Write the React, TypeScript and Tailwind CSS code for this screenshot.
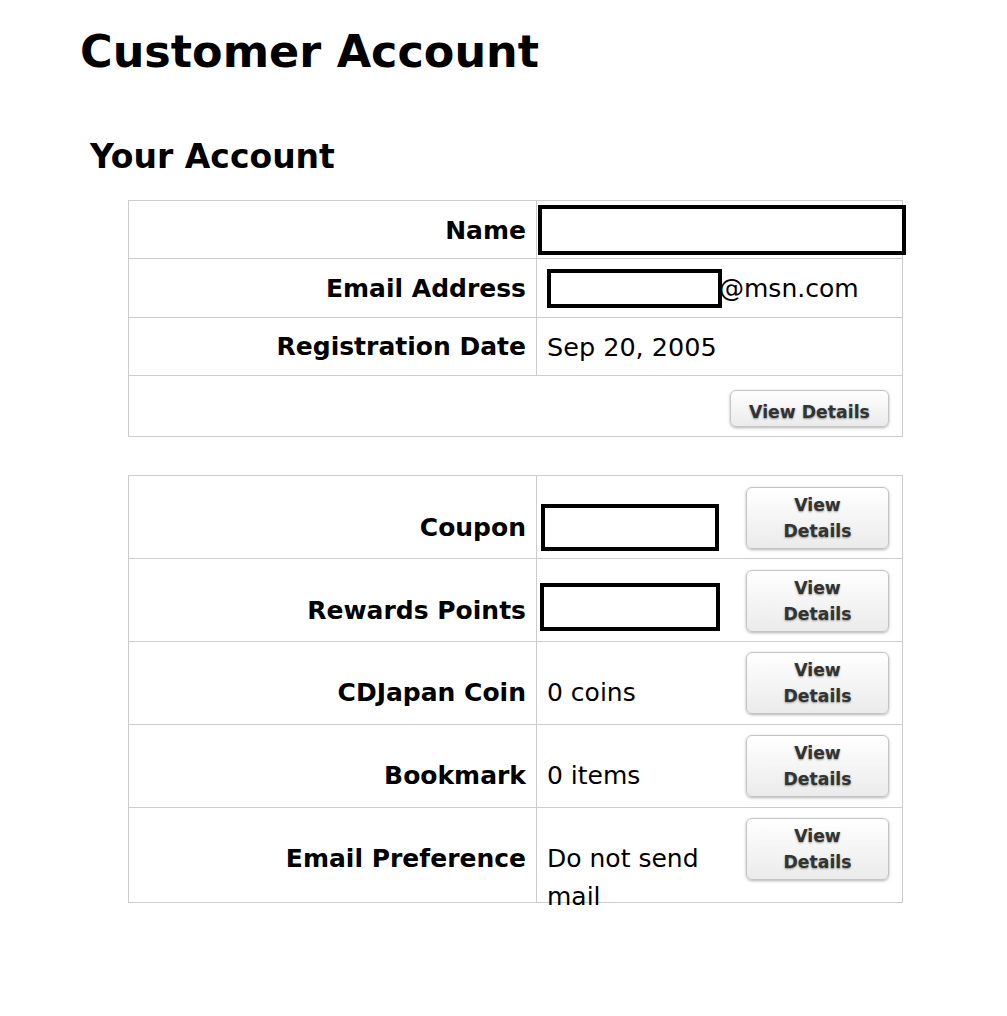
import React from 'react';

const font = "font-['DejaVu_Sans',Verdana,sans-serif]";

function DetailsButton({ wide = false }: { wide?: boolean }) {
  return (
    <button
      className={
        'shrink-0 rounded-[6px] border border-[#c4c4c4] bg-gradient-to-b from-white to-[#ebebeb] px-2 py-[4px] text-center text-[17.3px] font-bold leading-[26px] text-[#333] shadow-[0_1px_3px_rgba(0,0,0,0.3)] [text-shadow:0_1px_2px_rgba(0,0,0,0.4)] ' +
        (wide ? 'h-[37px] w-[159px] py-0 leading-[34px]' : 'w-[143px]')
      }
    >
      {wide ? 'View Details' : (
        <>
          View
          <br />
          Details
        </>
      )}
    </button>
  );
}

function Label({ children, pt }: { children: React.ReactNode; pt: string }) {
  return (
    <div className={'w-[408px] shrink-0 border-r border-[#ccc] pr-[10px] text-right text-[25px] font-bold leading-[38px] ' + pt}>
      {children}
    </div>
  );
}

export default function App() {
  const rows = [
    { label: 'Coupon', box: 'mt-[28px] ml-[4px] h-[47px] w-[178px]', pt: 'pt-[33px]', btn: 'mt-[11px]' },
    { label: 'Rewards Points', box: 'mt-[24px] ml-[3px] h-[48px] w-[180px]', pt: 'pt-[33px]', btn: 'mt-[11px]' },
    { label: 'CDJapan Coin', value: '0 coins', pt: 'pt-[32px]', btn: 'mt-[10px]' },
    { label: 'Bookmark', value: '0 items', pt: 'pt-[32px]', btn: 'mt-[10px]' },
    { label: 'Email Preference', value: 'Do not send mail', pt: 'pt-[32px]', btn: 'mt-[10px]', last: true },
  ];

  return (
    <div className={'min-h-[1016px] bg-white text-black ' + font}>
      <h1 className="pl-[80px] pt-[26px] text-[44.5px] font-bold leading-[52px]">Customer Account</h1>
      <h2 className="mt-[59px] pl-[90px] text-[33px] font-bold leading-[40px]">Your Account</h2>

      {/* account summary */}
      <div className="ml-[128px] mt-[23px] w-[775px] border border-[#ccc]">
        <div className="flex h-[58px] border-b border-[#ccc]">
          <Label pt="pt-[11px]">Name</Label>
          <div className="flex-1">
            <div className="ml-[1px] mt-[4px] h-[50px] w-[368px] border-4 border-black" />
          </div>
        </div>
        <div className="flex h-[59px] border-b border-[#ccc]">
          <Label pt="pt-[11px]">Email Address</Label>
          <div className="flex flex-1 items-start pl-[10px]">
            <div className="mt-[10px] h-[39px] w-[175px] border-4 border-black" />
            <span className="-ml-[3px] pt-[11px] text-[25px] leading-[38px]">@msn.com</span>
          </div>
        </div>
        <div className="flex h-[58px] border-b border-[#ccc]">
          <Label pt="pt-[10px]">Registration Date</Label>
          <div className="flex-1 pl-[10px] pt-[10px] text-[25.5px] leading-[38px]">Sep 20, 2005</div>
        </div>
        <div className="flex h-[60px] justify-end pr-[13px] pt-[14px]">
          <DetailsButton wide />
        </div>
      </div>

      {/* other details */}
      <div className="ml-[128px] mt-[38px] w-[775px] border border-[#ccc]">
        {rows.map((r) => (
          <div key={r.label} className={'flex ' + (r.last ? 'h-[94px]' : 'h-[83px] border-b border-[#ccc]')}>
            <Label pt={r.pt}>{r.label}</Label>
            <div className="flex flex-1 items-start pr-[13px]">
              {r.box ? (
                <div className="flex-1">
                  <div className={'border-4 border-black ' + r.box} />
                </div>
              ) : (
                <div className={'flex-1 pl-[10px] pr-[8px] text-[25px] leading-[38px] ' + r.pt}>{r.value}</div>
              )}
              <div className={r.btn}>
                <DetailsButton />
              </div>
            </div>
          </div>
        ))}
      </div>
    </div>
  );
}
